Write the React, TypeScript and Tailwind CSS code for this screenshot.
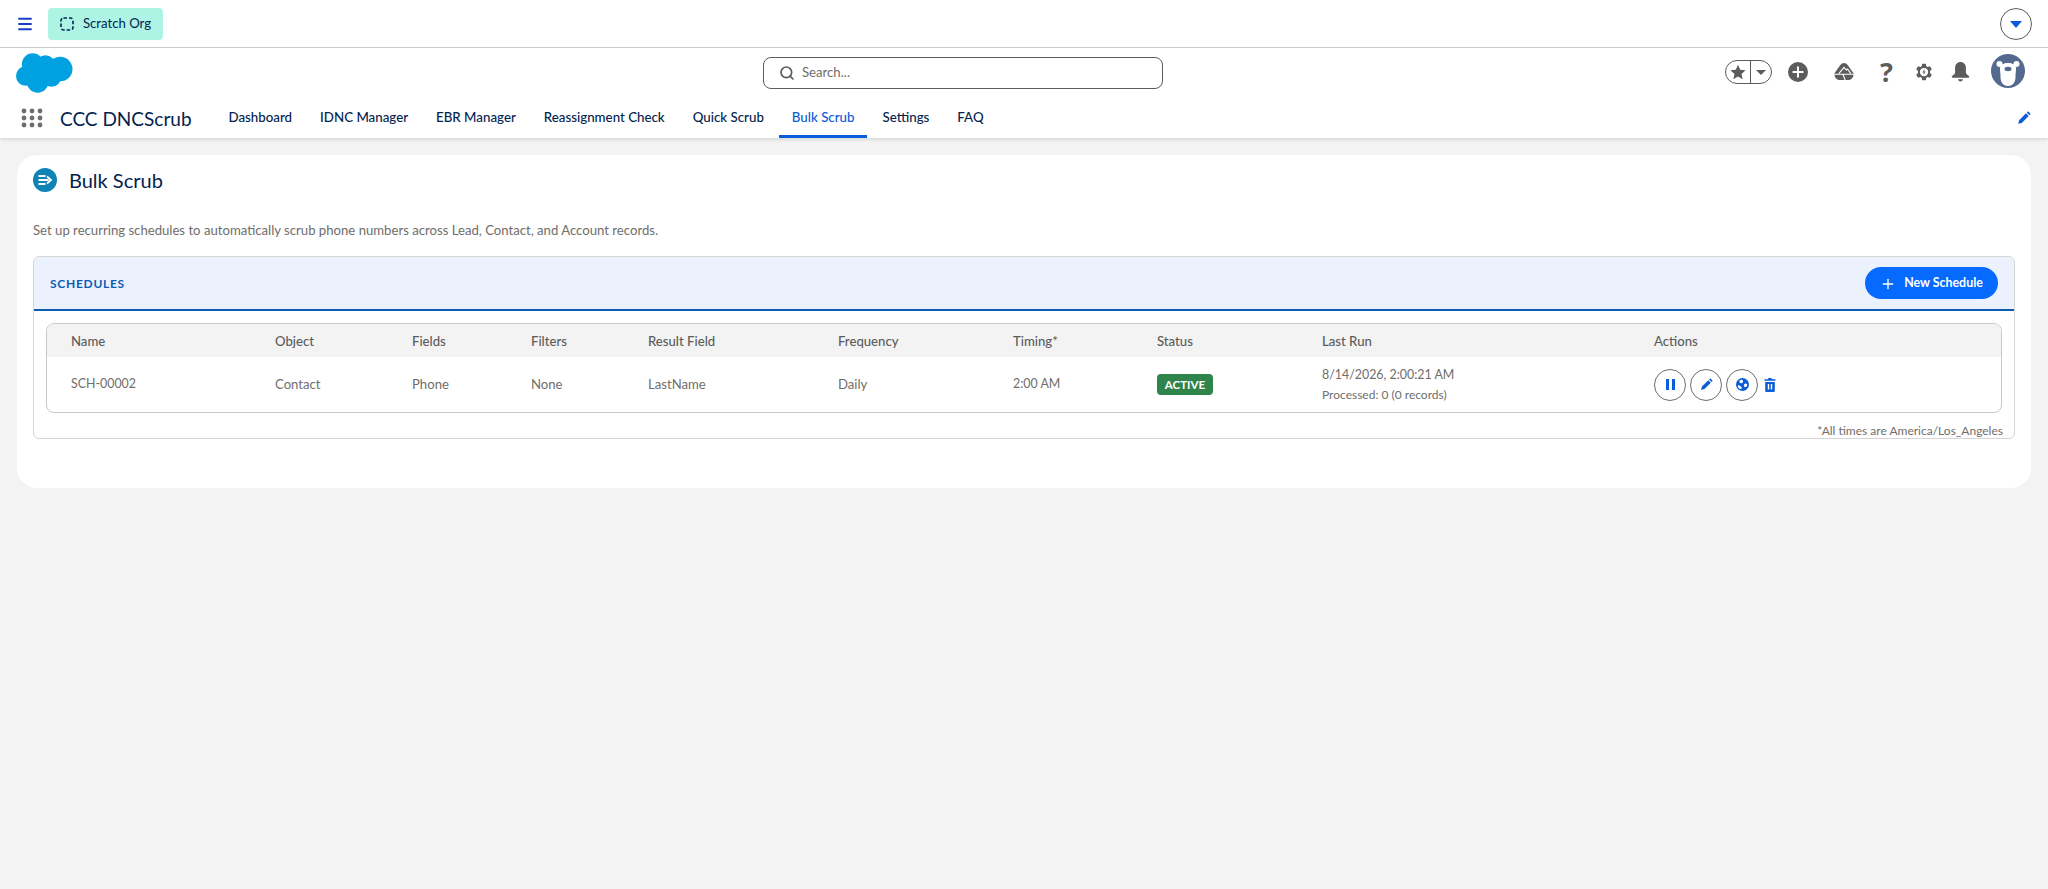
import { Plus, Search, Menu } from "lucide-react";

const navItems = ["Dashboard", "IDNC Manager", "EBR Manager", "Reassignment Check", "Quick Scrub", "Bulk Scrub", "Settings", "FAQ"];

const columns = ["Name", "Object", "Fields", "Filters", "Result Field", "Frequency", "Timing*", "Status", "Last Run", "Actions"];

const gridCols = "grid grid-cols-[204px_137px_119px_117px_190px_175px_144px_165px_332px_1fr]";

const Pencil = ({ className }: { className: string }) => (
  <svg viewBox="0 0 24 24" className={className} fill="currentColor">
    <path d="M2 22l1.6-6.2L15.4 4l4.6 4.6L8.2 20.4 2 22zM16.8 2.6l1.3-1.2c.5-.5 1.3-.5 1.8 0l2.7 2.7c.5.5.5 1.3 0 1.8l-1.2 1.3-4.6-4.6z" />
  </svg>
);

const Cloud = () => (
  <svg viewBox="0 0 58 40" className="h-10 w-[57px]" fill="#00a1e0">
    <circle cx="17" cy="11" r="11" />
    <circle cx="30" cy="12" r="10" />
    <circle cx="45" cy="16" r="12.5" />
    <circle cx="10" cy="23" r="10" />
    <circle cx="22" cy="29" r="11" />
    <circle cx="36" cy="24" r="10" />
    <rect x="12" y="10" width="32" height="18" />
  </svg>
);

const Launcher = () => (
  <svg viewBox="0 0 22 20" className="h-5 w-[22px]" fill="#706e6b">
    {[3, 10, 17].map((y) =>
      [3, 11, 19].map((x) => <circle key={`${x}-${y}`} cx={x} cy={y} r="2.4" />)
    )}
  </svg>
);

const Trailhead = () => (
  <svg viewBox="0 0 20 18" className="h-[18px] w-5">
    <path
      d="M10 0c1.800 0 3 1 4 2.400l5.500 7.800c.5 3.400-1.600 6.400-4.500 6.800H5c-2.900-.4-5-3.400-4.500-6.800L6 2.400C7 1 8.200 0 10 0z"
      fill="#5c5c5c"
    />
    <path d="M5 10.400l5-6 2.200 2.600 1.300-1 3.200 4.400M0 11.200h20M9 11.500l2.200 5.500" fill="none" stroke="#fff" strokeWidth="1.100" />
  </svg>
);

const Gear = () => (
  <svg viewBox="0 0 24 24" className="h-[18px] w-[18px]" fill="#5c5c5c">
    <path
      fillRule="evenodd"
      d="M9.6 1h4.8l.7 3.2 1.8 1 3.1-1 2.4 4.2-2.4 2.2v2.8l2.4 2.2-2.4 4.2-3.1-1-1.8 1-.7 3.2H9.6l-.7-3.2-1.8-1-3.1 1L1.600 15.600 4 13.400v-2.800L1.600 8.400 4 4.200l3.100 1 1.800-1L9.600 1zM12 6.500a5.500 5.500 0 100 11 5.500 5.500 0 000-11z"
    />
    <path d="M12.800 8l-3 4.800h2l-.6 3.200 3-4.800h-2l.6-3.200z" />
  </svg>
);

const Bell = () => (
  <svg viewBox="1.500 1 17 18.500" className="h-5 w-[19px]" fill="#5c5c5c">
    <path d="M10 1c3 0 5 2.400 5 5.400v4.200c0 1.300 1.200 2.200 2.500 3.100.8.500.9 1.800-.3 1.800H2.800c-1.200 0-1.100-1.300-.3-1.800C3.800 12.800 5 11.900 5 10.600V6.400C5 3.400 7 1 10 1z" />
    <path d="M7.800 17h4.400c0 1.200-1 2-2.200 2s-2.200-.8-2.200-2z" />
  </svg>
);

const Bear = () => (
  <svg viewBox="0 0 34 34" className="h-[34px] w-[34px]">
    <circle cx="17" cy="17" r="17" fill="#54698d" />
    <circle cx="8.500" cy="10" r="3" fill="#fff" />
    <circle cx="25.500" cy="10" r="3" fill="#fff" />
    <path d="M17 9c4 0 8 1.500 8 5 0 3-.5 5-.5 9 0 6-3.500 9-7.500 9s-7.500-3-7.500-9c0-4-.5-6-.5-9 0-3.500 4-5 8-5z" fill="#fff" />
    <ellipse cx="17" cy="15" rx="3.500" ry="2.200" fill="#54698d" />
  </svg>
);

const Globe = () => (
  <svg viewBox="0 0 16 16" className="h-[13px] w-[13px]" fill="#0b5cd8">
    <path
      fillRule="evenodd"
      d="M8 0a8 8 0 110 16A8 8 0 018 0zM6.500 2.200L4 3.500l.8 2.500 2.700.4 1.300-2.200-1-2zM11.500 6.500L9.500 8.500l1 3 2.600-.8.900-2.700-2.500-1.500zM3 8.500l-1 1.500 1.800 3 2.700.8.500-2.800L3 8.500z"
    />
  </svg>
);

const Trash = () => (
  <svg viewBox="0 0 12 14" className="h-[14px] w-3" fill="#0b5cd8">
    <path d="M4.500 0h3l.5 1.300h3.500v1.500H.5V1.300H4L4.500 0z" />
    <path
      fillRule="evenodd"
      d="M1.200 4h9.600v8.700c0 .7-.6 1.300-1.300 1.300h-7c-.7 0-1.300-.6-1.300-1.300V4zM3.800 6v5.500h1.400V6H3.800zm3 0v5.500h1.400V6H6.800z"
    />
  </svg>
);

const RoundButton = ({ children }: { children: React.ReactNode }) => (
  <button className="flex h-8 w-8 items-center justify-center rounded-full border border-[#706e6b] bg-white">
    {children}
  </button>
);

export default function App() {
  return (
    <div className="min-h-[889px] bg-[#f3f3f3] font-['Lato',sans-serif] text-[13.15px] text-[#5c5c5c]">
      {/* Setup bar */}
      <div className="flex h-12 items-center justify-between border-b border-[#c9c9c9] bg-white pl-4 pr-4">
        <div className="flex items-center gap-3.5">
          <Menu className="h-[18px] w-[18px] text-[#1b3fc4]" strokeWidth={2.4} />
          <div className="flex h-8 w-[115px] items-center gap-[9px] rounded bg-[#aef4e4] pl-3 text-[#03234d]">
            <svg viewBox="0 0 14 14" className="h-3.5 w-3.5" fill="none" stroke="#03234d" strokeWidth="1.600">
              <rect x="1" y="1" width="12" height="12" rx="2.500" strokeDasharray="3.500 2" />
            </svg>
            Scratch Org
          </div>
        </div>
        <button className="flex h-8 w-8 items-center justify-center rounded-full border border-[#5c5c5c]">
          <span className="mt-0.5 h-0 w-0 border-x-[6px] border-t-[7px] border-x-transparent border-t-[#0b5cd8]" />
        </button>
      </div>

      {/* Global header */}
      <div className="relative bg-white shadow-[0_2px_3px_rgba(0,0,0,0.1)]">
        <div className="flex h-[50px] items-start pl-4 pr-[23px] pt-[5px]">
          <div className="w-[747px]">
            <Cloud />
          </div>
          <div className="mt-1 flex h-8 w-[400px] items-center gap-[7px] rounded-lg border border-[#5c5c5c] pl-[15px] text-[#706e6b]">
            <Search className="h-4 w-4 text-[#5c5c5c]" strokeWidth={2.5} />
            <span>Search...</span>
          </div>
          <div className="ml-auto flex items-center">
            <div className="mt-[3px] flex h-6 w-[47px] items-center rounded-full border border-[#5c5c5c]">
              <span className="flex w-6 justify-center">
                <svg viewBox="0 0 16 16" className="h-4 w-4" fill="#5c5c5c">
                  <path d="M8 .8l2.200 5 5.400.5-4.100 3.600 1.200 5.300L8 12.400l-4.700 2.800 1.200-5.300L.4 6.300l5.400-.5L8 .8z" />
                </svg>
              </span>
              <span className="flex h-full flex-1 items-center justify-center border-l border-[#5c5c5c]">
                <span className="h-0 w-0 border-x-[5px] border-t-[5px] border-x-transparent border-t-[#5c5c5c]" />
              </span>
            </div>
            <span className="ml-4 mt-[3px] flex h-5 w-5 items-center justify-center rounded-full bg-[#5c5c5c]">
              <Plus className="h-4 w-4 text-white" strokeWidth={3} />
            </span>
            <span className="ml-[26px] mt-[3px]"><Trailhead /></span>
            <span className="ml-[26px] mt-[2px] w-[14px] font-['Noto_Sans',sans-serif] text-[27px] font-bold leading-none">?</span>
            <span className="ml-[21px] mt-[3px]"><Gear /></span>
            <span className="ml-[18px] mt-[3px]"><Bell /></span>
            <span className="ml-[21px] mt-[1px]"><Bear /></span>
          </div>
        </div>
        <div className="flex h-10 items-center pl-[21px] pr-[17px]">
          <Launcher />
          <span className="ml-[17px] w-[156px] text-[19px] leading-none text-[#03234d]">CCC DNCScrub</span>
          <nav className="flex h-full flex-1 items-center gap-[3px]">
            {navItems.map((item) => (
              <a
                key={item}
                className={
                  item === "Bulk Scrub"
                    ? "flex h-full items-center border-b-[3px] border-[#0b5cd8] px-[12.5px] pt-[3px] text-[13.3px] font-medium text-[#0b5cd8]"
                    : "flex h-full items-center px-[12.5px] text-[13.3px] font-medium text-[#03234d]"
                }
              >
                {item}
              </a>
            ))}
          </nav>
          <Pencil className="h-[14px] w-[14px] text-[#0b5cd8]" />
        </div>
      </div>

      {/* Page card */}
      <div className="mx-[17px] mt-[17px] h-[333px] rounded-[20px] bg-white px-4 pt-[13px]">
        <div className="flex h-6 items-center gap-3">
          <span className="flex h-6 w-6 items-center justify-center rounded-full bg-[#0f83b5]">
            <svg viewBox="0 0 16 16" className="h-4 w-4" fill="none" stroke="#fff" strokeWidth="1.800">
              <path d="M1.500 4h7M1.500 8h10M1.500 12h7M10 4.500L14 8l-4 3.500" />
            </svg>
          </span>
          <h1 className="text-[20px] leading-none text-[#03234d]">Bulk Scrub</h1>
        </div>
        <p className="mt-[29px] h-[18px] leading-[18px] text-[#706e6b]">
          Set up recurring schedules to automatically scrub phone numbers across Lead, Contact, and Account records.
        </p>

        <section className="mt-[17px] h-[183px] rounded-md border border-[#d5d5d5]">
          <div className="flex h-[54px] items-center justify-between rounded-t-md border-b-2 border-[#0b5cb5] bg-[#ebf2fe] pl-4 pr-4">
            <h2 className="pt-px text-[12px] font-bold tracking-[0.06em] text-[#0b5cb5]">SCHEDULES</h2>
            <button className="flex h-8 w-[133px] items-center justify-center gap-2 rounded-full bg-[#066afe] pt-px text-[12.4px] font-bold text-white">
              <Plus className="h-4 w-4" strokeWidth={2} />
              New Schedule
            </button>
          </div>

          <div className="mx-3 mt-3 h-[90px] overflow-hidden rounded-lg border border-[#c9c9c9]">
            <div className={`${gridCols} h-[33px] items-center bg-[#f3f3f3] pl-6 pt-[2px] font-medium`}>
              {columns.map((col) => (
                <span key={col}>{col}</span>
              ))}
            </div>
            <div className={`${gridCols} h-[55px] items-center pl-6 text-[#706e6b]`}>
              <span className="text-[12.4px]">SCH-00002</span>
              <span>Contact</span>
              <span>Phone</span>
              <span>None</span>
              <span>LastName</span>
              <span>Daily</span>
              <span className="text-[12.4px]">2:00 AM</span>
              <span>
                <span className="inline-flex h-[21px] w-14 items-center justify-center rounded bg-[#2e844a] text-[11.5px] font-bold text-white">
                  ACTIVE
                </span>
              </span>
              <div>
                <div className="text-[12.4px] leading-5">8/14/2026, 2:00:21 AM</div>
                <div className="text-[12px] leading-5">Processed: 0 (0 records)</div>
              </div>
              <div className="flex items-center gap-1">
                <RoundButton>
                  <span className="flex gap-[3px]">
                    <span className="h-[11px] w-[3px] bg-[#0b5cd8]" />
                    <span className="h-[11px] w-[3px] bg-[#0b5cd8]" />
                  </span>
                </RoundButton>
                <RoundButton>
                  <Pencil className="h-[13px] w-[13px] text-[#0b5cd8]" />
                </RoundButton>
                <RoundButton>
                  <Globe />
                </RoundButton>
                <span className="ml-0.5"><Trash /></span>
              </div>
            </div>
          </div>
          <p className="mr-[11px] mt-[10px] text-right text-[12px] leading-4 text-[#706e6b]">*All times are America/Los_Angeles</p>
        </section>
      </div>
    </div>
  );
}
